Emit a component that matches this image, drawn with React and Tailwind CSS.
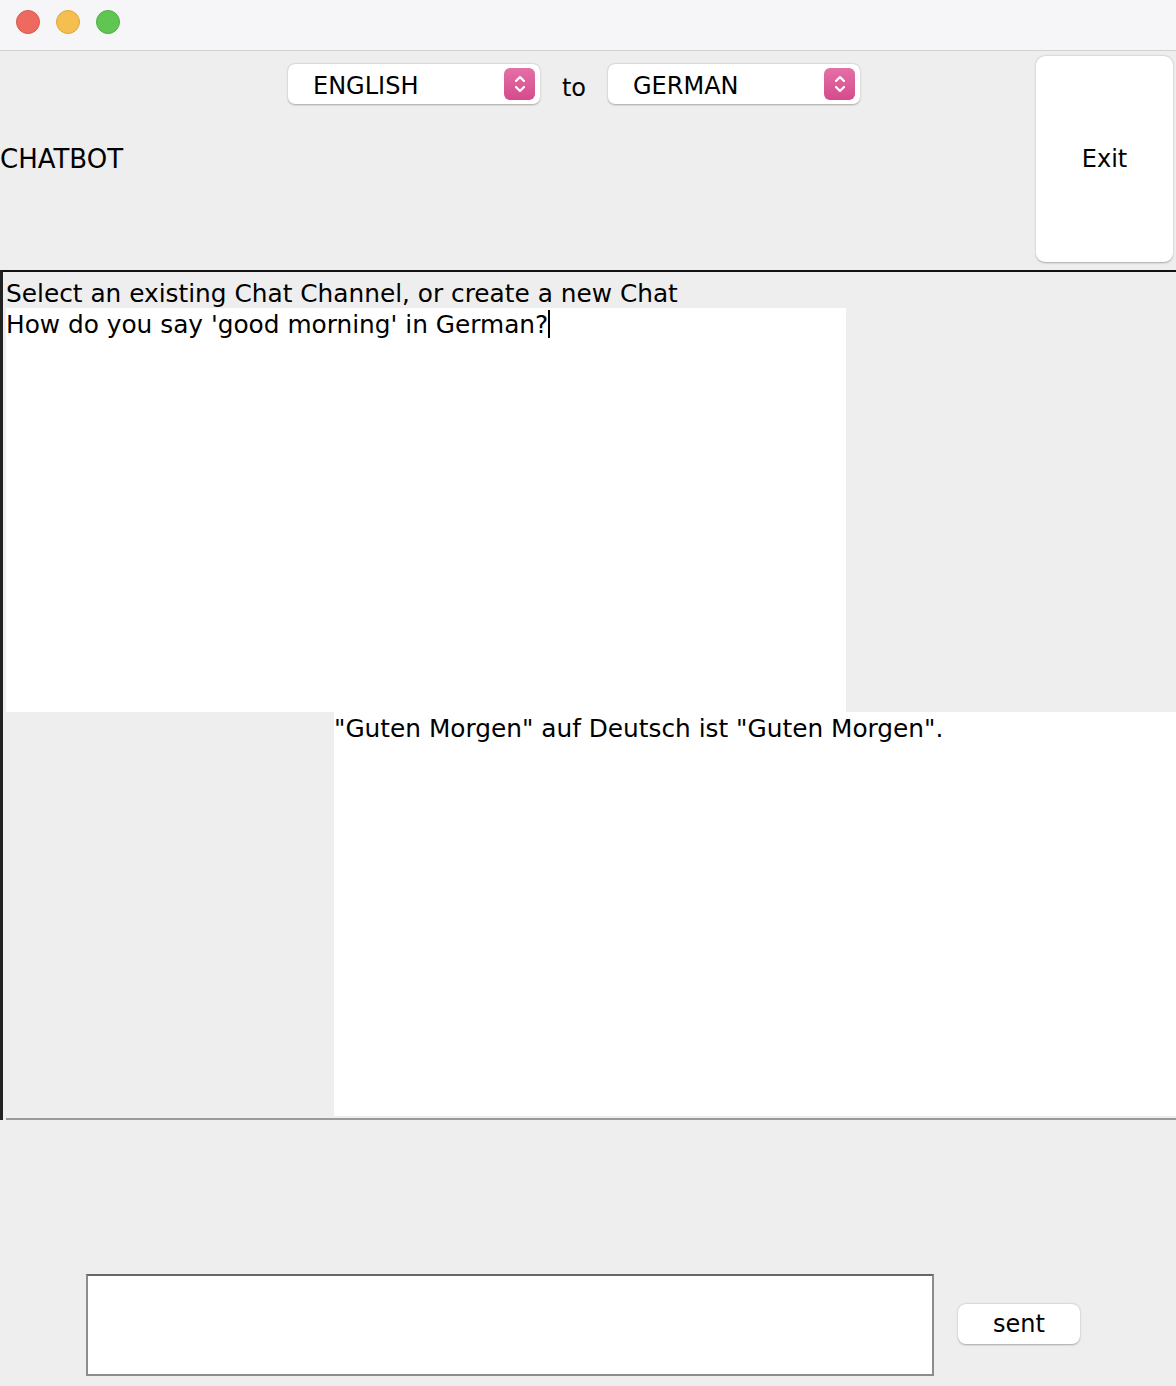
import React from "react";

const FONT = { fontFamily: '"DejaVu Sans", "Liberation Sans", sans-serif' };

function Stepper() {
  return (
    <div className="w-[31px] h-[32px] rounded-[6px] bg-gradient-to-b from-[#e56fa6] to-[#d44b8c] flex items-center justify-center">
      <svg width="14" height="22" viewBox="0 0 14 22" fill="none" stroke="white" strokeWidth="2.2" strokeLinecap="round" strokeLinejoin="round">
        <path d="M3 8 L7 4 L11 8" />
        <path d="M3 14 L7 18 L11 14" />
      </svg>
    </div>
  );
}

function LangSelect({ label }) {
  return (
    <div className="w-[252px] h-[40px] bg-white rounded-[7px] shadow-[0_0.5px_2px_rgba(0,0,0,0.3)] flex items-center pl-[25px] pr-[5px]">
      <span className="flex-1 text-[24px] text-black pt-[3px]">{label}</span>
      <Stepper />
    </div>
  );
}

export default function App() {
  return (
    <div className="w-[1176px] h-[1386px] bg-[#eeeeee] flex flex-col text-black overflow-hidden" style={FONT}>
      {/* title bar */}
      <div className="h-[51px] shrink-0 bg-[#f6f6f8] border-b border-[#d2d2d4] flex items-center gap-[16px] pl-[16px] pb-[6px]">
        <div className="w-[24px] h-[24px] rounded-full bg-[#ee6a5f] border border-[#d9574c]" />
        <div className="w-[24px] h-[24px] rounded-full bg-[#f5bf4f] border border-[#dea83c]" />
        <div className="w-[24px] h-[24px] rounded-full bg-[#61c554] border border-[#4fae43]" />
      </div>

      {/* header */}
      <div className="h-[219px] shrink-0 flex">
        <div className="w-[288px] flex items-center pb-[2px]">
          <span className="text-[26px]">CHATBOT</span>
        </div>
        <div className="pt-[13px] flex items-start">
          <LangSelect label="ENGLISH" />
          <span className="w-[68px] text-center text-[24px] leading-[48px]">to</span>
          <LangSelect label="GERMAN" />
        </div>
        <div className="flex-1" />
        <div className="pt-[5px] pr-[3px] pb-[8px] flex">
          <button className="w-[137px] h-full bg-white rounded-[9px] shadow-[0_0.5px_2px_rgba(0,0,0,0.3)] text-[24px]">
            Exit
          </button>
        </div>
      </div>

      {/* chat area */}
      <div className="h-[850px] shrink-0 border-t-2 border-[#111] border-l-[3px] border-l-[#222] flex flex-col pl-[3px]">
        <div className="h-[36px] shrink-0 text-[24.8px] leading-[36px] pt-[4px]">
          Select an existing Chat Channel, or create a new Chat
        </div>
        <div className="h-[404px] shrink-0 flex">
          <div className="w-[840px] bg-white text-[24.8px] leading-[34px]">
            How do you say 'good morning' in German?
            <span className="inline-block w-[2px] h-[28px] bg-black align-middle -mt-[4px]" />
          </div>
        </div>
        <div className="h-[404px] shrink-0 flex">
          <div className="w-[328px]" />
          <div className="flex-1 bg-white text-[24.8px] leading-[34px]">
            "Guten Morgen" auf Deutsch ist "Guten Morgen".
          </div>
        </div>
        <div className="flex-1 border-b-2 border-[#9a9a9a]" />
      </div>

      {/* input area */}
      <div className="flex-1 flex items-start pt-[154px] pl-[86px]">
        <div className="w-[848px] h-[102px] bg-white border-2 border-[#8c8c8c] border-t-[#666]" />
        <button className="ml-[24px] mt-[30px] w-[122px] h-[40px] bg-white rounded-[8px] shadow-[0_0.5px_2px_rgba(0,0,0,0.3)] text-[24px] leading-[40px]">
          sent
        </button>
      </div>
    </div>
  );
}
